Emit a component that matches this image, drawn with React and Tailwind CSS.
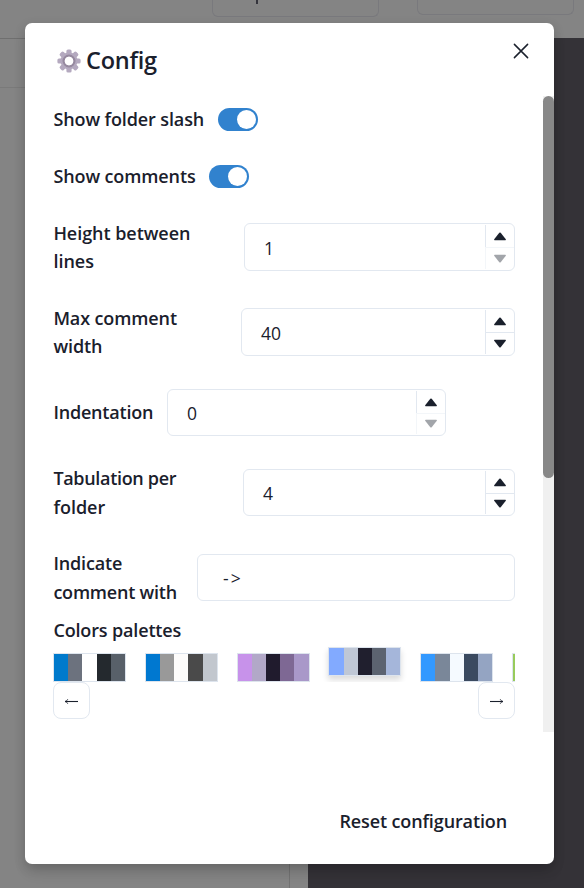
import React from "react";

function Toggle() {
  return (
    <span className="flex h-[23.5px] w-10 items-center justify-end rounded-full bg-[#3182ce] pr-[2.2px]">
      <span className="size-[19px] rounded-full bg-white" />
    </span>
  );
}

function SwitchRow({ label, labelWidth }) {
  return (
    <div className="flex h-[47px] items-center">
      <span className={`${labelWidth} shrink-0 pl-[0.4px] font-semibold tracking-[-0.11px] whitespace-nowrap`}>{label}</span>
      <Toggle />
    </div>
  );
}

function Label({ lines, width, leading = "leading-[28.5px]" }) {
  return (
    <div className={`${width} ${leading} shrink-0 pl-[0.4px] font-semibold whitespace-nowrap`}>
      {lines.map(([text, tracking]) => (
        <div key={text} className={tracking}>{text}</div>
      ))}
    </div>
  );
}

function Triangle({ down, faded }) {
  return (
    <svg
      width="14"
      height="9"
      viewBox="0 0 14 9"
      className={`${down ? "rotate-180" : ""} ${faded ? "opacity-40" : ""}`}
    >
      <path d="M6.3 0.8Q7 0.1 7.7 0.8L12.8 7.2Q13.2 8.2 12.3 8.2H1.7Q0.8 8.2 1.2 7.2Z" fill="#1a202c" />
    </svg>
  );
}

function NumberRow({ lines, labelWidth, leading, inputWidth, inputHeight, value, min }) {
  return (
    <div className="flex items-center">
      <Label lines={lines} width={labelWidth} leading={leading} />
      <div className={`flex ${inputWidth} ${inputHeight} rounded-md border border-[#e2e8f0] py-px`}>
        <div className="flex flex-1 items-center pt-0.5 pl-[19px] text-[17.5px]">{value}</div>
        <div className="flex w-[29px] flex-col">
          <div className="flex flex-1 items-center justify-center border-l border-[#e2e8f0] pt-px">
            <Triangle />
          </div>
          <div
            className={`flex flex-1 items-center justify-center border-t border-l ${
              min ? "border-[#f3f6f9]" : "border-[#e2e8f0]"
            }`}
          >
            <Triangle down faded={min} />
          </div>
        </div>
      </div>
    </div>
  );
}

const palettes = [
  ["bg-[#007acc]", "bg-[#6c727e]", "bg-[#ffffff]", "bg-[#24292e]", "bg-[#586069]"],
  ["bg-[#0078d0]", "bg-[#999999]", "bg-[#fdfcfb]", "bg-[#4a4a4a]", "bg-[#c2c7ce]"],
  ["bg-[#c792ea]", "bg-[#b2a8c8]", "bg-[#201b2d]", "bg-[#7e6894]", "bg-[#a998c9]"],
  ["bg-[#82aaff]", "bg-[#bfc7d5]", "bg-[#201f2e]", "bg-[#5c6370]", "bg-[#a5b6da]"],
  ["bg-[#3399ff]", "bg-[#7a8799]", "bg-[#f5faff]", "bg-[#3b4a60]", "bg-[#94a4c2]"],
  ["bg-[#98cb5c]", "bg-[#7a8799]", "bg-[#f5faff]", "bg-[#3b4a60]", "bg-[#94a4c2]"],
];

function Palette({ colors, selected }) {
  return (
    <div
      className={`flex h-[29px] w-[73px] shrink-0 border border-[#dde4ed] ${
        selected ? "-mt-1.5 shadow-[0_4px_6px_rgba(0,0,0,0.14)]" : ""
      }`}
    >
      {colors.map((c) => (
        <span key={c} className={`flex-1 ${c}`} />
      ))}
    </div>
  );
}

function Arrow({ left }) {
  return (
    <button className="flex size-[37px] items-center justify-center rounded-lg border border-[#e2e8f0] pt-px">
      <svg width="15" height="7" viewBox="0 0 15 7" className={left ? "rotate-180" : ""}>
        <path d="M1 3.5H14" stroke="#1a202c" strokeWidth="1.1" fill="none" />
        <path d="M11.2 1.2Q11.9 3.1 14 3.5Q11.9 3.9 11.2 5.8" stroke="#1a202c" strokeWidth="0.8" fill="none" />
      </svg>
    </button>
  );
}

const teeth = [0, 45, 90, 135, 180, 225, 270, 315];

function Gear() {
  return (
    <svg width="24" height="24" viewBox="0 0 24 24">
      {teeth.map((a) => (
        <rect key={a} x="9.4" y="0.4" width="5.2" height="6" rx="1.6" fill="#b4a9bf" transform={`rotate(${a} 12 12)`} />
      ))}
      <circle cx="12" cy="12" r="6.9" fill="none" stroke="#b4a9bf" strokeWidth="3.2" />
      <circle cx="12" cy="12" r="5.4" fill="none" stroke="#96899f" strokeWidth="2.2" />
      <circle cx="12" cy="12" r="4.2" fill="#fff" />
    </svg>
  );
}

function Backdrop() {
  return (
    <div className="absolute inset-0 flex flex-col bg-[#848484]">
      <div className="flex h-[39px] shrink-0 items-start border-b border-[#6f6f6f] pl-[212px]">
        <div className="flex h-[17px] w-[167px] rounded-b-md border border-t-0 border-[#79797d]">
          <span className="ml-[43px] h-1 w-0.5 bg-[#34343c]" />
        </div>
        <div className="ml-[38px] h-[15px] w-[157px] rounded-b-md border border-t-0 border-[#79797d]" />
      </div>
      <div className="-mt-px flex flex-1">
        <div className="w-[290px] border-r border-[#727272]">
          <div className="h-[50px] border-y border-t-[#6f6f6f] border-b-[#7a7a7a]" />
        </div>
        <div className="w-[18px]" />
        <div className="flex-1 bg-[#343237]" />
      </div>
    </div>
  );
}

export default function App() {
  return (
    <div className="relative h-[888px] w-[584px] overflow-hidden font-['Open_Sans','Noto_Sans',sans-serif] text-[18px] text-[#1a202c]">
      <Backdrop />
      <div className="relative mt-[23px] ml-[25px] flex h-[841px] w-[529px] flex-col rounded-[7px] bg-white shadow-[0_10px_15px_-3px_rgba(0,0,0,0.1),0_4px_12px_rgba(0,0,0,0.16)]">
        <header className="flex h-[73px] shrink-0 items-start justify-between pr-[25px] pl-8">
          <div className="flex items-center pt-[21px]">
            <Gear />
            <h1 className="-mt-px ml-[5px] text-[23.5px] leading-[34px] font-semibold tracking-[-0.25px]">Config</h1>
          </div>
          <svg width="16" height="16" viewBox="0 0 16 16" className="mt-5" aria-label="Close">
            <path d="M1.4 1.4L14.6 14.6M14.6 1.4L1.4 14.6" stroke="#1a202c" strokeWidth="1.5" strokeLinecap="round" />
          </svg>
        </header>

        <div className="flex h-[636px] shrink-0 justify-between">
          <div className="ml-7 w-[462px]">
            <SwitchRow label="Show folder slash" labelWidth="w-[165px]" />
            <div className="h-2.5" />
            <SwitchRow label="Show comments" labelWidth="w-[156px]" />
            <div className="flex flex-col pt-[19px]">
              <NumberRow
                lines={[["Height between", "tracking-[-0.05px]"], ["lines", "tracking-normal"]]}
                leading="leading-[28px]"
                labelWidth="w-[191px]" inputWidth="w-[271px]" inputHeight="h-12" value="1" min
              />
              <div className="h-[29px]" />
              <NumberRow
                lines={[["Max comment", "tracking-[-0.12px]"], ["width", "tracking-[-0.1px]"]]}
                leading="leading-[28px]"
                labelWidth="w-[188px]" inputWidth="w-[274px]" inputHeight="h-12" value="40"
              />
              <div className="h-[29px]" />
              <NumberRow
                lines={[["Indentation", "tracking-[-0.2px]"]]}
                labelWidth="w-[114px]" inputWidth="w-[279px]" inputHeight="h-[47px]" value="0" min
              />
              <div className="h-7" />
              <NumberRow
                lines={[["Tabulation per", "tracking-[-0.32px]"], ["folder", "tracking-normal"]]}
                labelWidth="w-[190px]" inputWidth="w-[272px]" inputHeight="h-[47px]" value="4"
              />
              <div className="h-7" />
              <div className="flex items-center">
                <Label
                  lines={[["Indicate", "tracking-[-0.15px]"], ["comment with", "tracking-[-0.22px]"]]}
                  width="w-[144px]"
                />
                <div className="flex h-[47px] w-[318px] items-center rounded-md border border-[#e2e8f0] pt-0.5 pl-[25px] text-[17.5px] tracking-[2px]">
                  -&gt;
                </div>
              </div>
            </div>
            <div className="mt-2.5 h-[29px] pl-[0.4px] leading-[28px] font-semibold tracking-[-0.15px]">Colors palettes</div>
            <div className="flex h-[37px] gap-[18.8px] overflow-hidden pt-2">
              {palettes.map((colors, i) => (
                <Palette key={i} colors={colors} selected={i === 3} />
              ))}
            </div>
            <div className="flex justify-between">
              <Arrow left />
              <Arrow />
            </div>
          </div>
          <div className="w-[11px] bg-[#f0f0f0]">
            <div className="h-[382px] rounded-full bg-[#888888]" />
          </div>
        </div>

        <footer className="flex flex-1 items-center justify-end pt-[46px] pr-[47px]">
          <button className="font-semibold tracking-[-0.12px]">Reset configuration</button>
        </footer>
      </div>
    </div>
  );
}
